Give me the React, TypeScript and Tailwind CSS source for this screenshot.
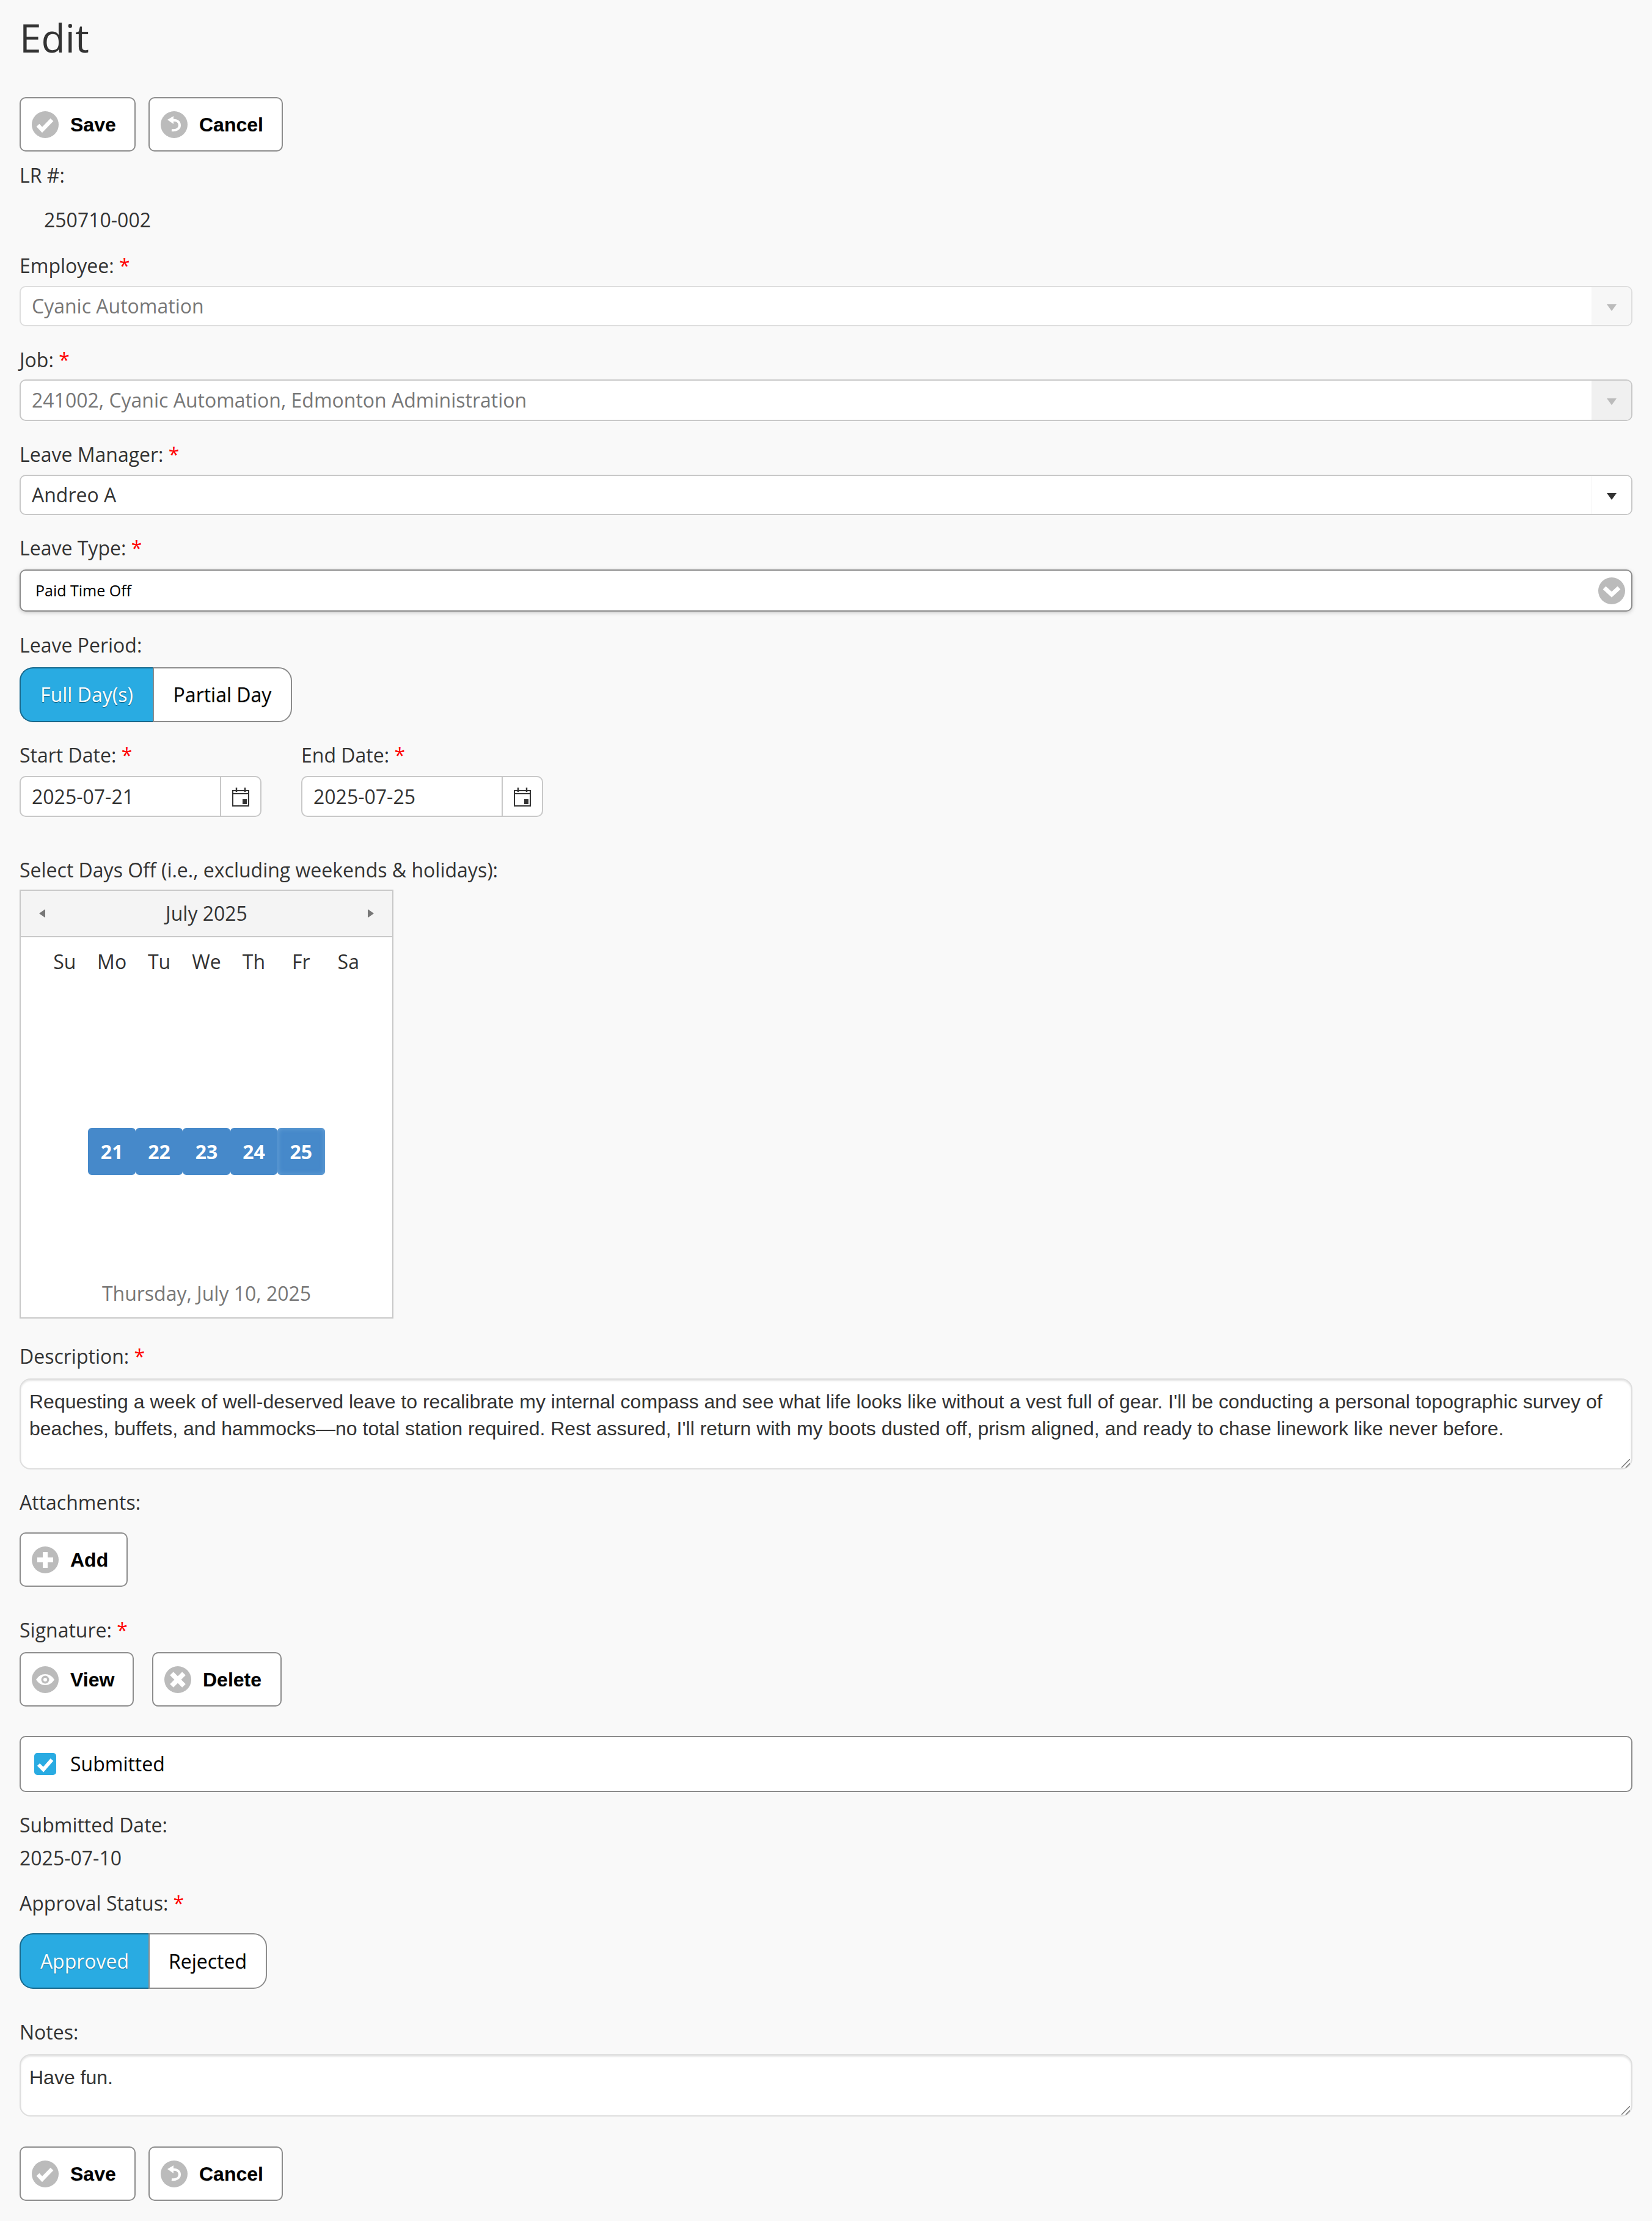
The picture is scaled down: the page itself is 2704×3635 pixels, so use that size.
import type { ReactNode } from "react";

const Stamp = ({ children }: { children: ReactNode }) => (
  <svg viewBox="0 0 44 44" className="w-[44px] h-[44px] shrink-0">
    <circle cx="22" cy="22" r="22" fill="#bbbbbb" />
    {children}
  </svg>
);

const CheckIcon = () => (
  <Stamp>
    <path d="M10 23l7 7.500L33 14" fill="none" stroke="#fff" strokeWidth="6.500" />
  </Stamp>
);

const BackIcon = () => (
  <Stamp>
    <path d="M21 8v13l-10-7z" fill="#fff" />
    <path d="M19 15c7-1 12 2 12 8s-6 9-13 8" fill="none" stroke="#fff" strokeWidth="4" />
  </Stamp>
);

const PlusIcon = () => (
  <Stamp>
    <path d="M22 9v26M9 22h26" fill="none" stroke="#fff" strokeWidth="8" />
  </Stamp>
);

const EyeIcon = () => (
  <Stamp>
    <path d="M7 22c4-6 9-9 15-9s11 3 15 9c-4 6-9 9-15 9s-11-3-15-9z" fill="#fff" />
    <circle cx="22" cy="22" r="6.500" fill="#bbbbbb" />
    <circle cx="22" cy="22" r="3" fill="#fff" />
  </Stamp>
);

const CrossIcon = () => (
  <Stamp>
    <path d="M12 12l20 20M32 12L12 32" fill="none" stroke="#fff" strokeWidth="8" />
  </Stamp>
);

const CalendarIcon = () => (
  <svg viewBox="0 0 28 32" className="w-[28px] h-[32px]">
    <path d="M1 6h26v25H1z" fill="none" stroke="#333" strokeWidth="2" />
    <path d="M1 11h26" stroke="#333" strokeWidth="2" />
    <path d="M7 1v7M21 1v7" stroke="#333" strokeWidth="2.500" />
    <rect x="17" y="20" width="7" height="8" fill="#333" />
  </svg>
);

const IconButton = ({ icon, label, width }: { icon: ReactNode; label: string; width: string }) => (
  <button
    className={`${width} h-[89px] flex items-center pl-[18px] gap-[19px] bg-white border-2 border-[#8c8c8c] rounded-[10px] font-['Liberation_Sans',sans-serif] font-bold text-[32px] text-black [text-shadow:0_1px_1px_#ccc]`}
  >
    {icon}
    {label}
  </button>
);

const Label = ({ text, required, className = "" }: { text: string; required?: boolean; className?: string }) => (
  <div className={`h-[44px] leading-[44px] text-[32px] text-[#333] ${className}`}>
    {text}
    {required && <span className="text-[#ff0000]"> *</span>}
  </div>
);

const Select = ({ value, tone }: { value: string; tone: "faded" | "grey" | "live" }) => (
  <div
    className={`flex border-2 rounded-[10px] bg-white overflow-hidden text-[32px] ${
      tone === "faded" ? "h-[66px] border-[#dedede]" : tone === "grey" ? "h-[68px] border-[#c8c8c8]" : "h-[66px] border-[#c8c8c8]"
    }`}
  >
    <div className={`flex-1 pl-[18px] flex items-center ${tone === "live" ? "text-[#333]" : "text-[#777]"}`}>{value}</div>
    <div
      className={`w-[65px] flex items-center justify-center ${
        tone === "faded" ? "bg-[#f7f7f7]" : tone === "grey" ? "bg-[#f0f0f0]" : "bg-white border-l border-[#f4f4f4]"
      }`}
    >
      <div
        className={`w-0 h-0 mt-[4px] border-x-[8px] border-x-transparent border-t-[11px] ${
          tone === "live" ? "border-t-[#333]" : "border-t-[#bbbbbb]"
        }`}
      />
    </div>
  </div>
);

const DateInput = ({ value }: { value: string }) => (
  <div className="w-[396px] h-[67px] flex bg-white border-2 border-[#c8c8c8] rounded-[10px] overflow-hidden">
    <div className="flex-1 pl-[18px] flex items-center text-[32px] text-[#333]">{value}</div>
    <div className="w-[66px] flex items-center justify-center border-l-2 border-[#c8c8c8]">
      <CalendarIcon />
    </div>
  </div>
);

const Toggle = ({ on, off, onWidth, width, height }: { on: string; off: string; onWidth: string; width: string; height: string }) => (
  <div className={`${width} ${height} flex text-[32px]`}>
    <div
      className={`${onWidth} flex items-center justify-center bg-[#29abe2] border-2 border-[#17688c] border-r-0 rounded-l-[22px] text-white [text-shadow:0_1px_1px_#0b5a7c]`}
    >
      {on}
    </div>
    <div className="flex-1 flex items-center justify-center bg-white border-2 border-[#8c8c8c] rounded-r-[22px] text-black [text-shadow:0_1px_1px_#ccc]">
      {off}
    </div>
  </div>
);

const TextArea = ({ children, height }: { children: ReactNode; height: string }) => (
  <div
    className={`relative ${height} bg-white border-2 border-[#dedede] rounded-[18px] px-[14px] pt-[14px] font-['Liberation_Sans',sans-serif] text-[32px] leading-[44px] text-[#333] shadow-[inset_0_2px_3px_#e4e4e4]`}
  >
    {children}
    <svg viewBox="0 0 14 14" className="absolute right-[2px] bottom-[1px] w-[14px] h-[14px]">
      <path d="M0 14L14 0M7 14l7-7" stroke="#777" strokeWidth="1.500" />
    </svg>
  </div>
);

const days = ["Su", "Mo", "Tu", "We", "Th", "Fr", "Sa"];
const selected = [21, 22, 23, 24, 25];

export default function App() {
  return (
    <div className="min-h-[3635px] bg-[#f9f9f9] px-[32px] pt-[20px] pb-[32px] font-['Open_Sans',sans-serif]">
      <h1 className="h-[84px] leading-[84px] text-[64px] text-[#333]">Edit</h1>

      <div className="mt-[55px] flex gap-[21px]">
        <IconButton icon={<CheckIcon />} label="Save" width="w-[190px]" />
        <IconButton icon={<BackIcon />} label="Cancel" width="w-[220px]" />
      </div>

      <Label text="LR #:" className="mt-[17px]" />
      <Label text="250710-002" className="mt-[29px] pl-[40px]" />

      <Label text="Employee:" required className="mt-[31px]" />
      <div className="mt-[11px]">
        <Select value="Cyanic Automation" tone="faded" />
      </div>

      <Label text="Job:" required className="mt-[33px]" />
      <div className="mt-[10px]">
        <Select value="241002, Cyanic Automation, Edmonton Administration" tone="grey" />
      </div>

      <Label text="Leave Manager:" required className="mt-[33px]" />
      <div className="mt-[11px]">
        <Select value="Andreo A" tone="live" />
      </div>

      <Label text="Leave Type:" required className="mt-[32px]" />
      <div className="mt-[13px] h-[69px] flex items-center justify-between pl-[24px] pr-[10px] bg-white border-2 border-[#8c8c8c] rounded-[10px] shadow-[0_2px_6px_#ccc]">
        <span className="text-[25px] text-black">Paid Time Off</span>
        <svg viewBox="0 0 44 44" className="w-[44px] h-[44px]">
          <circle cx="22" cy="22" r="22" fill="#bbbbbb" />
          <path d="M10 17l12 11 12-11" fill="none" stroke="#fff" strokeWidth="7" />
        </svg>
      </div>

      <Label text="Leave Period:" className="mt-[33px]" />
      <div className="mt-[14px]">
        <Toggle on="Full Day(s)" off="Partial Day" onWidth="w-[218px]" width="w-[446px]" height="h-[90px]" />
      </div>

      <div className="mt-[32px] flex gap-[65px]">
        <div>
          <Label text="Start Date:" required />
          <div className="mt-[12px]">
            <DateInput value="2025-07-21" />
          </div>
        </div>
        <div>
          <Label text="End Date:" required />
          <div className="mt-[12px]">
            <DateInput value="2025-07-25" />
          </div>
        </div>
      </div>

      <Label text="Select Days Off (i.e., excluding weekends & holidays):" className="mt-[65px]" />

      <div className="mt-[10px] w-[612px] h-[702px] flex flex-col bg-white border-2 border-[#c8c8c8] text-[32px] text-[#333]">
        <div className="h-[76px] flex items-center justify-between px-[30px] bg-[#f4f4f4] border-b-2 border-[#c8c8c8]">
          <div className="w-0 h-0 border-y-[7px] border-y-transparent border-r-[10px] border-r-[#777]" />
          <span>July 2025</span>
          <div className="w-0 h-0 border-y-[7px] border-y-transparent border-l-[10px] border-l-[#777]" />
        </div>
        <div className="mt-[18px] w-[542px] mx-auto grid grid-cols-7 text-center leading-[44px]">
          {days.map((d) => (
            <span key={d}>{d}</span>
          ))}
        </div>
        <div className="mt-[250px] w-[542px] mx-auto grid grid-cols-7 h-[77px]">
          <span />
          {selected.map((n) => (
            <span
              key={n}
              className={`flex items-center justify-center rounded-[6px] font-bold text-white ${
                n === 25 ? "bg-[#4689ca] shadow-[inset_0_0_8px_#6fa6d8]" : "bg-[#4689ca]"
              }`}
            >
              {n}
            </span>
          ))}
        </div>
        <div className="mt-[172px] text-center leading-[44px] text-[#777]">Thursday, July 10, 2025</div>
      </div>

      <Label text="Description:" required className="mt-[40px]" />
      <div className="mt-[14px]">
        <TextArea height="h-[149px]">
          Requesting a week of well-deserved leave to recalibrate my internal compass and see what life looks like without a vest full of gear. I'll be conducting a personal topographic survey of beaches, buffets, and hammocks—no total station required. Rest assured, I'll return with my boots dusted off, prism aligned, and ready to chase linework like never before.
        </TextArea>
      </div>

      <Label text="Attachments:" className="mt-[32px]" />
      <div className="mt-[27px] flex">
        <IconButton icon={<PlusIcon />} label="Add" width="w-[177px]" />
      </div>

      <Label text="Signature:" required className="mt-[49px]" />
      <div className="mt-[14px] flex gap-[30px]">
        <IconButton icon={<EyeIcon />} label="View" width="w-[187px]" />
        <IconButton icon={<CrossIcon />} label="Delete" width="w-[212px]" />
      </div>

      <div className="mt-[48px] h-[92px] flex items-center gap-[23px] pl-[22px] bg-white border-2 border-[#8c8c8c] rounded-[10px] text-[32px] text-black">
        <svg viewBox="0 0 36 36" className="w-[36px] h-[36px]">
          <rect width="36" height="36" rx="5" fill="#29abe2" />
          <path d="M7 19l8 8 14-16" fill="none" stroke="#fff" strokeWidth="6" />
        </svg>
        Submitted
      </div>

      <Label text="Submitted Date:" className="mt-[32px]" />
      <Label text="2025-07-10" className="mt-[10px]" />

      <Label text="Approval Status:" required className="mt-[30px]" />
      <div className="mt-[27px]">
        <Toggle on="Approved" off="Rejected" onWidth="w-[211px]" width="w-[405px]" height="h-[91px]" />
      </div>

      <Label text="Notes:" className="mt-[49px]" />
      <div className="mt-[14px]">
        <TextArea height="h-[102px]">Have fun.</TextArea>
      </div>

      <div className="mt-[49px] flex gap-[21px]">
        <IconButton icon={<CheckIcon />} label="Save" width="w-[190px]" />
        <IconButton icon={<BackIcon />} label="Cancel" width="w-[220px]" />
      </div>
    </div>
  );
}
